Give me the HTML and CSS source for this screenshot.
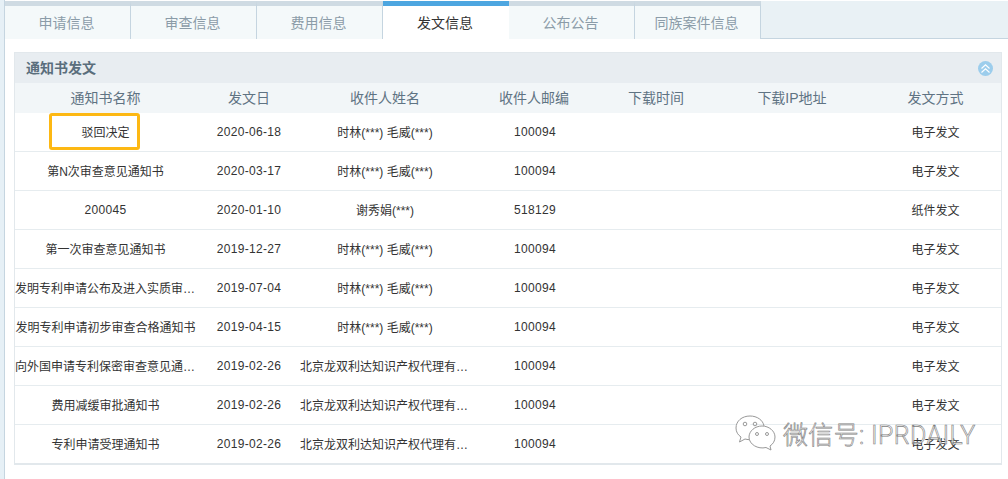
FILE: index.html
```html
<!DOCTYPE html>
<html lang="zh">
<head>
<meta charset="utf-8">
<title>发文信息</title>
<link rel="stylesheet" href="styles.css">
</head>
<body>
<div class="page">
  <nav class="tabs">
    <a class="tab">申请信息</a>
    <a class="tab">审查信息</a>
    <a class="tab">费用信息</a>
    <a class="tab active">发文信息</a>
    <a class="tab">公布公告</a>
    <a class="tab">同族案件信息</a>
  </nav>
  <section class="panel">
    <header class="panel-head">
      <h2>通知书发文</h2>
      <span class="collapse">
        <svg width="15" height="15" viewBox="0 0 15 15"><path d="M3.500 7.500 7.500 3.800 11.500 7.500M3.500 11.500 7.500 7.800 11.500 11.500" fill="none" stroke="#fff" stroke-width="1.100"/></svg>
      </span>
    </header>
    <div class="row thead"><span class="zh">通知书名称</span><span class="zh">发文日</span><span class="zh">收件人姓名</span><span class="zh">收件人邮编</span><span class="zh">下载时间</span><span class="zh">下载IP地址</span><span class="zh">发文方式</span></div>
    <div class="row"><span class="zh">驳回决定</span><span class="num">2020-06-18</span><span class="zh">时林(***) 毛威(***)</span><span class="num">100094</span><span></span><span></span><span class="zh">电子发文</span></div>
    <div class="row"><span class="zh">第N次审查意见通知书</span><span class="num">2020-03-17</span><span class="zh">时林(***) 毛威(***)</span><span class="num">100094</span><span></span><span></span><span class="zh">电子发文</span></div>
    <div class="row"><span class="num">200045</span><span class="num">2020-01-10</span><span class="zh">谢秀娟(***)</span><span class="num">518129</span><span></span><span></span><span class="zh">纸件发文</span></div>
    <div class="row"><span class="zh">第一次审查意见通知书</span><span class="num">2019-12-27</span><span class="zh">时林(***) 毛威(***)</span><span class="num">100094</span><span></span><span></span><span class="zh">电子发文</span></div>
    <div class="row"><span class="zh">发明专利申请公布及进入实质审查通知书</span><span class="num">2019-07-04</span><span class="zh">时林(***) 毛威(***)</span><span class="num">100094</span><span></span><span></span><span class="zh">电子发文</span></div>
    <div class="row"><span class="zh">发明专利申请初步审查合格通知书</span><span class="num">2019-04-15</span><span class="zh">时林(***) 毛威(***)</span><span class="num">100094</span><span></span><span></span><span class="zh">电子发文</span></div>
    <div class="row"><span class="zh">向外国申请专利保密审查意见通知书</span><span class="num">2019-02-26</span><span class="zh">北京龙双利达知识产权代理有限公司</span><span class="num">100094</span><span></span><span></span><span class="zh">电子发文</span></div>
    <div class="row"><span class="zh">费用减缓审批通知书</span><span class="num">2019-02-26</span><span class="zh">北京龙双利达知识产权代理有限公司</span><span class="num">100094</span><span></span><span></span><span class="zh">电子发文</span></div>
    <div class="row"><span class="zh">专利申请受理通知书</span><span class="num">2019-02-26</span><span class="zh">北京龙双利达知识产权代理有限公司</span><span class="num">100094</span><span></span><span></span><span class="zh">电子发文</span></div>
  </section>
  <div class="next-panel"></div>
</div>
<div class="highlight"></div>
<div class="watermark">
  <svg width="42" height="36" viewBox="0 0 42 36">
    <path d="M15 1C7 1 1 6 1 13c0 4 2 7 5 9l-1.500 5 5.500-3c2 .6 4 .8 6 .6" fill="#fff" stroke="#999" stroke-width="1"/>
    <path d="M15 1c7 0 13 4 14 10" fill="none" stroke="#999" stroke-width="1"/>
    <path d="M27 11c7 0 13 5 13 11 0 4-2 7-5 9l1 4-5-2.500c-8 2-17-3-17-10.500 0-6 6-11 13-11z" fill="#fff" stroke="#999" stroke-width="1"/>
    <circle cx="10" cy="9" r="1.800" fill="none" stroke="#999"/><circle cx="20" cy="9" r="1.800" fill="none" stroke="#999"/>
    <circle cx="22" cy="19" r="1.500" fill="none" stroke="#999"/><circle cx="32" cy="19" r="1.500" fill="none" stroke="#999"/>
  </svg>
  <span>微信号: IPRDAILY</span>
</div>
</body>
</html>
```
FILE: styles.css
```css
* { box-sizing: border-box; }
html, body { margin: 0; height: 100%; overflow: hidden; }
body {
  background: #fff;
  font-family: "Liberation Sans", "Noto Sans CJK SC", sans-serif;
  font-size: 12px;
  color: #333;
  position: relative;
}
.page {
  height: 479px;
  margin-left: 4px;
  border-left: 1px solid #c5d5e0;
  box-shadow: -4px 0 0 #e6f0f6;
  padding-top: 1px;
}
.tabs {
  display: flex;
  height: 38px;
  background: #e9f1f5;
  border-bottom: 1px solid #c5d5e0;
}
.tab {
  width: 126px;
  height: 38px;
  padding-right: 2px;
  background: #f4f9fa;
  border-top: 5px solid #cfdbe3;
  border-right: 1px solid #c5d5e0;
  color: #8b9ca8;
  font-size: 14px;
  line-height: 34px;
  text-align: center;
}
.tab.active {
  background: #fff;
  border-top-color: #4da6e0;
  border-right: 0;
  color: #333;
}
.panel {
  margin: 13px 6px 0 9px;
  border: 1px solid #e2e8ec;
  border-width: 1px 1px 2px 1px;
}
.panel-head {
  height: 30px;
  background: #e8edf1;
  display: flex;
  align-items: center;
  justify-content: space-between;
  padding: 0 8px 0 11px;
}
.panel-head h2 {
  margin: 0 0 2px;
  font-size: 14px;
  font-weight: bold;
  color: #5a6e7c;
}
.collapse {
  width: 15px;
  height: 15px;
  border-radius: 50%;
  background: #9ccdec;
  display: flex;
}
.row {
  display: grid;
  grid-template-columns: 181px 104px 170px 128px 116px 156px 1fr;
  height: 39px;
  align-items: center;
  border-bottom: 1px solid #e6ecef;
  text-align: center;
}
.row span {
  white-space: nowrap;
  overflow: hidden;
  text-overflow: ellipsis;
}
.row .zh { padding-bottom: 2px; }
.row .num { letter-spacing: 0.33px; }
.row span:nth-child(2) { padding-left: 2px; }
.row .num:nth-child(4) { padding-left: 2px; }
.row:last-child { border-bottom: 0; height: 38px; }
.thead {
  height: 30px;
  background: #f2f6f8;
  border-bottom: 0;
  color: #5f7383;
  font-size: 14px;
}
.next-panel {
  margin: 14px 6px 0 9px;
  border-top: 1px solid #e6ecef;
}
.highlight {
  position: absolute;
  left: 49px;
  top: 113px;
  width: 91px;
  height: 37px;
  border: 3px solid #fdb813;
  border-radius: 3px;
}
.watermark {
  position: absolute;
  left: 735px;
  top: 415px;
  display: flex;
  align-items: center;
  gap: 6px;
}
.watermark span {
  font-family: Roboto, "Noto Sans CJK SC", sans-serif;
  font-weight: 300;
  font-size: 25px;
  letter-spacing: 0.35px;
  color: rgba(255,255,255,0.8);
  -webkit-text-stroke: 0.6px #7d7d7d;
}
```
